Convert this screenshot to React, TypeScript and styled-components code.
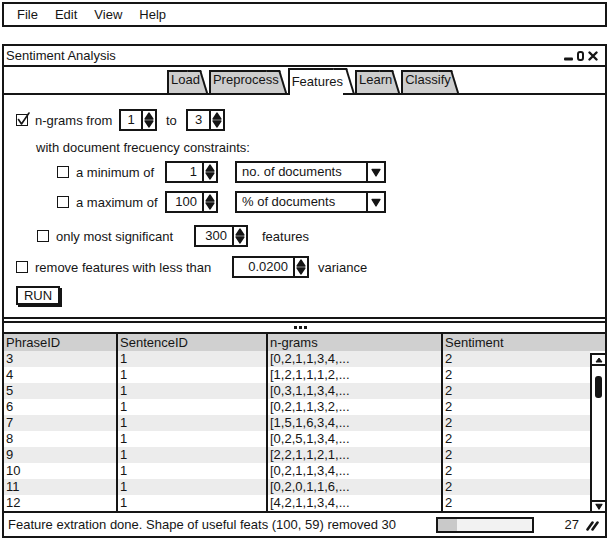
import React from "react";
import styled, { createGlobalStyle } from "styled-components";

const Global = createGlobalStyle`
  html, body { margin: 0; padding: 0; background: #fff; }
  body { font-family: "Liberation Sans", Arial, sans-serif; font-size: 13px; color: #151515; }
  * { box-sizing: border-box; }
`;

const INK = "#151515";

const Page = styled.div`
  width: 609px;
  height: 538px;
  overflow: hidden;
  display: flex;
  flex-direction: column;
`;

const MenuBar = styled.div`
  margin: 2px 2px 0 2px;
  height: 25px;
  flex-shrink: 0;
  border: 2px solid ${INK};
  display: flex;
  align-items: center;
  gap: 17px;
  padding-left: 13px;
`;

const Window = styled.div`
  margin: 17px 2px 0 2px;
  flex: 1;
  min-height: 0;
  border: 2px solid ${INK};
  display: flex;
  flex-direction: column;
`;

const TitleBar = styled.div`
  height: 21px;
  flex-shrink: 0;
  border-bottom: 2px solid ${INK};
  display: flex;
  align-items: center;
  justify-content: space-between;
  padding: 0 7px 0 2px;
`;

const WinControls = styled.div`
  display: flex;
  align-items: flex-end;
  gap: 4px;
`;

const TabStrip = styled.div`
  height: 26px;
  flex-shrink: 0;
  display: flex;
  align-items: flex-end;
  padding-left: 163px;
`;

const Tab = styled.div<{ $active?: boolean }>`
  position: relative;
  z-index: ${(p) => (p.$active ? 3 : 1)};
  height: ${(p) => (p.$active ? 27 : 23)}px;
  margin-bottom: ${(p) => (p.$active ? -2 : 0)}px;
  margin-right: ${(p) => (p.$active ? 12 : 9)}px;
  padding: ${(p) => (p.$active ? 4 : 0)}px 0 0 2px;
  background: ${(p) => (p.$active ? "#fff" : "#cdcdcd")};
  border-top: 2px solid ${INK};
  border-left: 2px solid ${INK};
  line-height: 16px;
  white-space: nowrap;
  &::after {
    content: "";
    position: absolute;
    top: -2px;
    bottom: ${(p) => (p.$active ? 2 : 0)}px;
    right: ${(p) => (p.$active ? -4 : -1)}px;
    width: 12px;
    background: inherit;
    border-top: 2px solid ${INK};
    border-right: 2px solid ${INK};
    transform: skewX(17deg);
    transform-origin: top left;
    z-index: -1;
  }
`;

const Panel = styled.div`
  height: 226px;
  flex-shrink: 0;
  border-top: 2px solid ${INK};
  border-bottom: 2px solid ${INK};
  display: flex;
  flex-direction: column;
`;

const FormRow = styled.div<{ $top: number; $indent: number }>`
  display: flex;
  align-items: center;
  height: 22px;
  margin-top: ${(p) => p.$top}px;
  padding-left: ${(p) => p.$indent}px;
  white-space: nowrap;
`;

const TextLine = styled.div<{ $top: number; $indent: number }>`
  height: 16px;
  line-height: 16px;
  margin-top: ${(p) => p.$top}px;
  padding-left: ${(p) => p.$indent}px;
`;

const Label = styled.span<{ $w: number; $ml?: number }>`
  display: inline-block;
  width: ${(p) => p.$w}px;
  margin-left: ${(p) => p.$ml ?? 0}px;
  flex-shrink: 0;
`;

const CheckBoxBox = styled.span`
  position: relative;
  display: inline-block;
  width: 12px;
  height: 12px;
  border: 1.5px solid ${INK};
  background: #fff;
  flex-shrink: 0;
  margin-right: 7px;
`;

const CheckMark = styled.svg`
  position: absolute;
  left: 0px;
  top: -3px;
  overflow: visible;
`;

const SpinBox = styled.div<{ $w: number; $ml?: number }>`
  display: flex;
  height: 22px;
  width: ${(p) => p.$w}px;
  margin-left: ${(p) => p.$ml ?? 0}px;
  flex-shrink: 0;
  border: 2px solid ${INK};
  background: #fff;
`;

const SpinValue = styled.div<{ $center?: boolean }>`
  flex: 1;
  display: flex;
  align-items: center;
  justify-content: ${(p) => (p.$center ? "center" : "flex-end")};
  padding: 0 ${(p) => (p.$center ? 0 : 5)}px 1px 0;
`;

const SpinArrows = styled.div`
  width: 14px;
  border-left: 2px solid ${INK};
  display: flex;
  align-items: center;
  justify-content: center;
`;

const Select = styled.div<{ $ml?: number }>`
  display: flex;
  height: 22px;
  width: 151px;
  margin-left: ${(p) => p.$ml ?? 0}px;
  border: 2px solid ${INK};
  background: #fff;
`;

const SelectText = styled.div`
  flex: 1;
  display: flex;
  align-items: center;
  padding: 0 0 1px 5px;
`;

const SelectArrow = styled.div`
  width: 18px;
  border-left: 2px solid ${INK};
  display: flex;
  align-items: center;
  justify-content: center;
`;

const RunButton = styled.div`
  width: 44px;
  height: 19px;
  margin: 8px 0 0 12px;
  border: 2px solid ${INK};
  box-shadow: 2px 2px 0 ${INK};
  display: flex;
  align-items: center;
  justify-content: center;
  padding-bottom: 1px;
`;

const Splitter = styled.div`
  margin-top: 2px;
  height: 13px;
  flex-shrink: 0;
  border-top: 2px solid ${INK};
  border-bottom: 2px solid ${INK};
  border-left: 2px solid ${INK};
  margin-left: -2px;
  display: flex;
  align-items: center;
  justify-content: center;
  gap: 2px;
  padding-right: 8px;
`;

const Dot = styled.span`
  width: 3px;
  height: 3px;
  background: ${INK};
`;

const Table = styled.div`
  flex: 1;
  min-height: 0;
  display: flex;
  flex-direction: column;
`;

const GridRow = styled.div<{ $bg: string; $h: number }>`
  display: grid;
  grid-template-columns: 114px 150px 175px 1fr;
  height: ${(p) => p.$h}px;
  background: ${(p) => p.$bg};
`;

const Cell = styled.div<{ $last?: boolean }>`
  line-height: 16px;
  padding: 0 0 0 2px;
  display: flex;
  align-items: center;
  border-right: ${(p) => (p.$last ? "none" : `2px solid ${INK}`)};
  white-space: nowrap;
  overflow: hidden;
`;

const Body = styled.div`
  flex: 1;
  display: flex;
`;

const Rows = styled.div`
  flex: 1;
  display: flex;
  flex-direction: column;
`;

const ScrollBar = styled.div`
  width: 15px;
  margin-top: 2px;
  border-left: 2px solid ${INK};
  border-top: 2px solid ${INK};
  display: flex;
  flex-direction: column;
  background: #fff;
`;

const ScrollBtn = styled.div<{ $top?: boolean }>`
  height: 11px;
  display: flex;
  align-items: center;
  justify-content: center;
  border-${(p) => (p.$top ? "bottom" : "top")}: 2px solid ${INK};
`;

const Track = styled.div`
  flex: 1;
  padding-top: 10px;
  display: flex;
  justify-content: center;
`;

const Thumb = styled.div`
  width: 7px;
  height: 22px;
  border-radius: 3px;
  background: ${INK};
`;

const StatusBar = styled.div`
  height: 25px;
  flex-shrink: 0;
  border-top: 2px solid ${INK};
  display: flex;
  align-items: center;
  padding-left: 4px;
`;

const StatusText = styled.div`
  flex: 1;
  white-space: nowrap;
`;

const Progress = styled.div`
  width: 98px;
  height: 16px;
  border: 2px solid ${INK};
  background: #f2f2f2;
  display: flex;
`;

const ProgressFill = styled.div`
  background: #c9c9c9;
`;

const Count = styled.div`
  width: 45px;
  text-align: right;
`;

const Grip = styled.div`
  width: 26px;
  display: flex;
  justify-content: center;
`;

const SpinIcon = () => (
  <svg width="10" height="16" viewBox="0 0 10 16">
    <path d="M5 1.2 L8.8 7 H1.2 Z" fill={INK} stroke={INK} strokeWidth="1.6" strokeLinejoin="round" />
    <path d="M1.2 9 H8.8 L5 14.8 Z" fill={INK} stroke={INK} strokeWidth="1.6" strokeLinejoin="round" />
  </svg>
);

const DownTri = ({ w = 10, h = 9 }: { w?: number; h?: number }) => (
  <svg width={w} height={h} viewBox="0 0 10 9">
    <path d="M1 1.5 H9 L5 8 Z" fill={INK} stroke={INK} strokeWidth="1.3" strokeLinejoin="round" />
  </svg>
);

const UpTri = () => (
  <svg width="8" height="6" viewBox="0 0 8 6">
    <path d="M1 5 H7 L4 1 Z" fill={INK} stroke={INK} strokeWidth="1" strokeLinejoin="round" />
  </svg>
);

const CheckBox = ({ checked }: { checked?: boolean }) => (
  <CheckBoxBox>
    {checked && (
      <CheckMark width="14" height="14" viewBox="0 0 14 14">
        <path d="M1.5 7.5 L4.5 12 L12 1" fill="none" stroke={INK} strokeWidth="1.6" strokeLinecap="round" strokeLinejoin="round" />
      </CheckMark>
    )}
  </CheckBoxBox>
);

const Spinner = ({ value, w, ml, center }: { value: string; w: number; ml?: number; center?: boolean }) => (
  <SpinBox $w={w} $ml={ml}>
    <SpinValue $center={center}>{value}</SpinValue>
    <SpinArrows>
      <SpinIcon />
    </SpinArrows>
  </SpinBox>
);

const Dropdown = ({ text, ml }: { text: string; ml?: number }) => (
  <Select $ml={ml}>
    <SelectText>{text}</SelectText>
    <SelectArrow>
      <DownTri />
    </SelectArrow>
  </Select>
);

const rows: [string, string, string, string][] = [
  ["3", "1", "[0,2,1,1,3,4,...", "2"],
  ["4", "1", "[1,2,1,1,1,2,...", "2"],
  ["5", "1", "[0,3,1,1,3,4,...", "2"],
  ["6", "1", "[0,2,1,1,3,2,...", "2"],
  ["7", "1", "[1,5,1,6,3,4,...", "2"],
  ["8", "1", "[0,2,5,1,3,4,...", "2"],
  ["9", "1", "[2,2,1,1,2,1,...", "2"],
  ["10", "1", "[0,2,1,1,3,4,...", "2"],
  ["11", "1", "[0,2,0,1,1,6,...", "2"],
  ["12", "1", "[4,2,1,1,3,4,...", "2"],
];

export default function App() {
  return (
    <Page>
      <Global />
      <MenuBar>
        <span>File</span>
        <span>Edit</span>
        <span>View</span>
        <span>Help</span>
      </MenuBar>
      <Window>
        <TitleBar>
          <span>Sentiment Analysis</span>
          <WinControls>
            <svg width="9" height="11" viewBox="0 0 9 11">
              <rect x="0" y="7.5" width="9" height="3" rx="1" fill={INK} />
            </svg>
            <svg width="7" height="11" viewBox="0 0 7 11">
              <rect x="1" y="2" width="5" height="8" rx="2" fill="none" stroke={INK} strokeWidth="2" />
            </svg>
            <svg width="10" height="11" viewBox="0 0 10 11">
              <path d="M1.5 2.5 L8.5 9.5 M8.5 2.5 L1.5 9.5" stroke={INK} strokeWidth="2.4" strokeLinecap="round" />
            </svg>
          </WinControls>
        </TitleBar>
        <TabStrip>
          <Tab>Load</Tab>
          <Tab>Preprocess</Tab>
          <Tab $active>Features</Tab>
          <Tab>Learn</Tab>
          <Tab>Classify</Tab>
        </TabStrip>
        <Panel>
          <FormRow $top={14} $indent={12}>
            <CheckBox checked />
            <Label $w={84}>n-grams from</Label>
            <Spinner value="1" w={38} center />
            <Label $w={20} $ml={9}>to</Label>
            <Spinner value="3" w={39} center />
          </FormRow>
          <TextLine $top={9} $indent={32}>with document frecuency constraints:</TextLine>
          <FormRow $top={5} $indent={53}>
            <CheckBox />
            <Label $w={89}>a minimum of</Label>
            <Spinner value="1" w={53} />
            <Dropdown text="no. of documents" ml={17} />
          </FormRow>
          <FormRow $top={8} $indent={53}>
            <CheckBox />
            <Label $w={89}>a maximum of</Label>
            <Spinner value="100" w={53} />
            <Dropdown text="% of documents" ml={17} />
          </FormRow>
          <FormRow $top={12} $indent={33}>
            <CheckBox />
            <Label $w={138}>only most significant</Label>
            <Spinner value="300" w={54} />
            <Label $w={60} $ml={14}>features</Label>
          </FormRow>
          <FormRow $top={9} $indent={12}>
            <CheckBox />
            <Label $w={197}>remove features with less than</Label>
            <Spinner value="0.0200" w={77} />
            <Label $w={60} $ml={9}>variance</Label>
          </FormRow>
          <RunButton>RUN</RunButton>
        </Panel>
        <Splitter>
          <Dot />
          <Dot />
          <Dot />
        </Splitter>
        <Table>
          <GridRow $bg="#d0d0d0" $h={17}>
            <Cell>PhraseID</Cell>
            <Cell>SentenceID</Cell>
            <Cell>n-grams</Cell>
            <Cell $last>Sentiment</Cell>
          </GridRow>
          <Body>
            <Rows>
              {rows.map((r, i) => (
                <GridRow key={r[0]} $bg={i % 2 === 0 ? "#ececec" : "#ffffff"} $h={16}>
                  <Cell>{r[0]}</Cell>
                  <Cell>{r[1]}</Cell>
                  <Cell>{r[2]}</Cell>
                  <Cell $last>{r[3]}</Cell>
                </GridRow>
              ))}
            </Rows>
            <ScrollBar>
              <ScrollBtn $top>
                <UpTri />
              </ScrollBtn>
              <Track>
                <Thumb />
              </Track>
              <ScrollBtn>
                <DownTri w={8} h={7} />
              </ScrollBtn>
            </ScrollBar>
          </Body>
        </Table>
        <StatusBar>
          <StatusText>Feature extration done. Shape of useful feats (100, 59) removed 30</StatusText>
          <Progress>
            <ProgressFill style={{ width: "20%" }} />
          </Progress>
          <Count>27</Count>
          <Grip>
            <svg width="13" height="12" viewBox="0 0 13 12">
              <path d="M1.5 10.5 L6.5 3.5 M6.5 10.5 L11.5 3.5" stroke={INK} strokeWidth="2.6" strokeLinecap="round" />
            </svg>
          </Grip>
        </StatusBar>
      </Window>
    </Page>
  );
}
